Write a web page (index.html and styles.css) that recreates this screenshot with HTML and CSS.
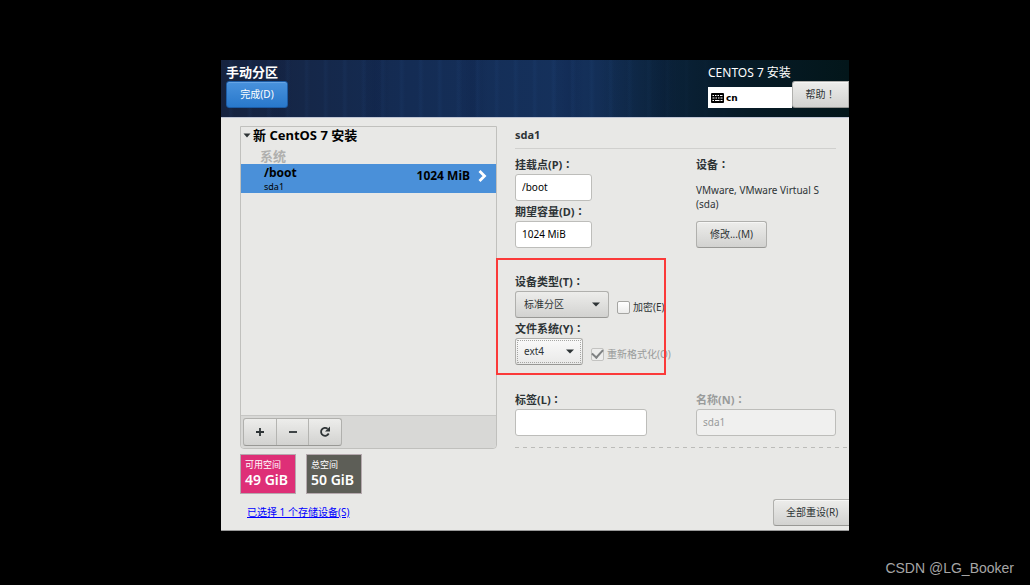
FILE: index.html
```html
<!DOCTYPE html>
<html lang="zh-CN">
<head>
<meta charset="utf-8">
<title>手动分区</title>
<link rel="stylesheet" href="styles.css">
</head>
<body>
<main class="installer">
  <header class="banner">
    <div class="banner-left">
      <h1 class="banner-title">手动分区</h1>
      <button class="btn btn-primary" type="button">完成(D)</button>
    </div>
    <div class="banner-right">
      <div class="product">CENTOS 7 安装</div>
      <div class="banner-tools">
        <button class="keyboard" type="button">
          <svg width="13" height="10" viewBox="0 0 13 10" aria-hidden="true"><rect width="13" height="10" rx="1"/><path d="M1.500 2.500h1.500m1 0h1.500m1 0h1.500m1 0h2.500M1.500 5h2m1 0h1.500m1 0h1.500m1 0h2M1.500 7.500h1.500m1 0h4.500m1 0h2" stroke="#fff"/></svg>
          cn
        </button>
        <button class="btn help" type="button">帮助<span class="mark" lang="zh-TW">！</span></button>
      </div>
    </div>
  </header>

  <div class="content">
    <section class="left">
      <div class="tree">
        <div class="tree-body">
          <div class="tree-head"><svg width="8" height="5" viewBox="0 0 8 5" aria-hidden="true"><path d="M0.500 0.500h7L4 4.500z" fill="#2e3436"/></svg>新 CentOS 7 安装</div>
          <div class="tree-group">系统</div>
          <div class="tree-row">
            <div class="mount"><b>/boot</b><small>sda1</small></div>
            <span class="size">1024 MiB</span>
            <svg class="chevron" width="9" height="12" viewBox="0 0 9 12" aria-hidden="true"><path d="M1.500 1l5 5-5 5" fill="none" stroke="#fff" stroke-width="2.800"/></svg>
          </div>
        </div>
        <div class="toolbar">
          <div class="tool-group">
            <button type="button" aria-label="添加"><svg width="10" height="10" viewBox="0 0 10 10"><path d="M5 1v8M1 5h8"/></svg></button>
            <button type="button" aria-label="删除"><svg width="10" height="10" viewBox="0 0 10 10"><path d="M1 5h8"/></svg></button>
            <button type="button" aria-label="刷新"><svg width="12" height="12" viewBox="0 0 12 12"><path d="M8.600 2.700A4 4 0 1 0 9.700 7.500"/><path class="solid" d="M11 0.500v5H6z"/></svg></button>
          </div>
        </div>
      </div>
      <div class="spaces">
        <div class="space free"><span>可用空间</span><strong>49 GiB</strong></div>
        <div class="space total"><span>总空间</span><strong>50 GiB</strong></div>
      </div>
      <a class="devices" href="#">已选择 1 个存储设备(S)</a>
    </section>

    <form class="details">
      <h2 class="details-title">sda1</h2>
      <div class="pair">
        <div class="field">
          <label for="mount">挂载点(P)<span class="mark" lang="zh-TW">：</span></label>
          <input class="text short" id="mount" type="text" value="/boot">
          <label for="capacity">期望容量(D)<span class="mark" lang="zh-TW">：</span></label>
          <input class="text short" id="capacity" type="text" value="1024 MiB">
        </div>
        <div class="field">
          <div class="label">设备<span class="mark" lang="zh-TW">：</span></div>
          <p class="device-name">VMware, VMware Virtual S (sda)</p>
          <button class="btn modify" type="button">修改...(M)</button>
        </div>
      </div>

      <div class="types">
        <label for="type">设备类型(T)<span class="mark" lang="zh-TW">：</span></label>
        <div class="line">
          <span class="drop drop-type">
            <select id="type"><option>标准分区</option></select>
            <svg width="8" height="5" viewBox="0 0 8 5" aria-hidden="true"><path d="M0 0.500h8L4 4.500z"/></svg>
          </span>
          <label class="check clipped"><input type="checkbox">加密(E)</label>
        </div>
        <label for="fs">文件系统(Y)<span class="mark" lang="zh-TW">：</span></label>
        <div class="line">
          <span class="drop drop-fs">
            <select id="fs"><option>ext4</option></select>
            <svg width="8" height="5" viewBox="0 0 8 5" aria-hidden="true"><path d="M0 0.500h8L4 4.500z"/></svg>
          </span>
          <label class="check off"><input type="checkbox" checked disabled>重新格式化(O)</label>
        </div>
        <div class="highlight"></div>
      </div>

      <div class="pair">
        <div class="field">
          <label for="label">标签(L)<span class="mark" lang="zh-TW">：</span></label>
          <input class="text medium" id="label" type="text">
        </div>
        <div class="field">
          <label class="off" for="name">名称(N)<span class="mark" lang="zh-TW">：</span></label>
          <input class="text" id="name" type="text" value="sda1" disabled>
        </div>
      </div>
      <svg class="divider" height="1" width="100%" aria-hidden="true"><line x1="0" y1="0.500" x2="100%" y2="0.500" stroke="#bcbcb9" stroke-dasharray="4 4"/></svg>
      <button class="btn reset" type="button">全部重设(R)</button>
    </form>
  </div>
</main>
<footer class="credit">CSDN @LG_Booker</footer>
</body>
</html>
```
FILE: styles.css
```css
* { box-sizing: border-box; }

body {
  margin: 0;
  padding: 60px 181px 0 221px;
  background: #000;
  color: #2e3436;
  font: 10px/14px "Noto Sans", "Noto Sans CJK SC", sans-serif;
}

button, input, select { font: inherit; color: inherit; margin: 0; }
h1, h2, p { margin: 0; }

/* Centred full-width punctuation */
.mark { font-family: "Noto Sans CJK TC", sans-serif; line-height: 1; }

.installer {
  background: #e8e8e6;
  border-bottom: 1px solid #999;
  overflow: hidden;
}

.banner {
  display: flex;
  justify-content: space-between;
  height: 58px;
  padding: 4px 0 0 5px;
  border-bottom: 1px solid #bfc5d4;
  color: #fff;
  background:
    linear-gradient(90deg, transparent 60%, #061a26 84%, #03161a),
    repeating-linear-gradient(90deg, transparent 0 7px, rgba(60, 120, 200, .05) 9px 10px, transparent 13px 19px),
    repeating-linear-gradient(90deg, transparent 0 41px, rgba(5, 15, 50, .12) 56px 58px, transparent 73px 97px),
    linear-gradient(90deg, #16233f 0%, #142c54 30%, #15315c 55%, #0e2848 75%);
}

.banner-title { font-size: 13px; line-height: 17px; font-weight: 700; }
.banner-right { width: 141px; }
.product { font-size: 12px; line-height: 17px; }
.banner-tools { display: flex; align-items: flex-end; }

.btn {
  height: 27px;
  border: 1px solid #b0b0ad;
  border-bottom-color: #989895;
  border-radius: 3px;
  padding: 0 12px 2px;
  background: linear-gradient(#ededeb, #d2d2d0);
  box-shadow: inset 0 1px #f6f6f5;
  color: #2e3436;
  white-space: nowrap;
}

.btn-primary {
  display: block;
  width: 62px;
  border-color: #1c5ca6;
  color: #fff;
  background: linear-gradient(#4992dd, #2878cb);
  box-shadow: inset 0 1px #67a5e5;
}

.keyboard {
  flex: 1;
  display: flex;
  align-items: center;
  gap: 2px;
  height: 21px;
  padding: 0 3px;
  border: 0;
  background: #fff;
  color: #000;
  font-family: "DejaVu Sans", sans-serif;
  font-size: 9px;
  font-weight: 700;
}

.help { width: 57px; border-radius: 3px 0 0 3px; }

.content { display: flex; gap: 18px; padding: 8px 0 4px 19px; }
.left { width: 257px; }

.tree { border: 1px solid #c0c0bd; border-radius: 0 0 4px 4px; }
.tree-body { height: 288px; color: #000; }
.tree-head {
  display: flex;
  align-items: center;
  gap: 2px;
  padding-left: 2px;
  font-size: 13px;
  line-height: 17px;
  font-weight: 700;
}
.tree-group { padding: 4px 0 0 19px; font-size: 13px; line-height: 16px; font-weight: 700; color: #b0b0ae; }
.tree-row {
  display: flex;
  align-items: center;
  height: 29px;
  padding: 0 9px 0 23px;
  background: #4a90d9;
  font-size: 12px;
}
.mount { flex: 1; display: grid; }
.mount b { line-height: 16px; }
.mount small { font-size: 9px; line-height: 12px; }
.size { margin: 0 8px 6px 0; font-weight: 700; }
.chevron { margin-bottom: 6px; }

.toolbar { padding: 2px; border-top: 1px solid #c6c6c4; background: #d8d8d6; border-radius: 0 0 4px 4px; }
.tool-group {
  display: flex;
  width: 99px;
  height: 28px;
  border: 1px solid #b0b0ad;
  border-bottom-color: #989895;
  border-radius: 3px;
  background: linear-gradient(#ededeb, #d2d2d0);
}
.tool-group button {
  flex: 1;
  display: grid;
  place-items: center;
  padding: 0;
  border: 0;
  background: none;
}
.tool-group button + button { border-left: 1px solid #b4b4b1; }
.tool-group path { fill: none; stroke: #2e3436; stroke-width: 1.8; }
.tool-group .solid { fill: #2e3436; stroke: none; }

.spaces { display: flex; gap: 10px; margin-top: 5px; }
.space {
  display: grid;
  align-content: start;
  width: 56px;
  height: 40px;
  padding: 3px 4px 0;
  border: 1px solid #b5a9ae;
  color: #fff;
  white-space: nowrap;
}
.space span { font-size: 9px; line-height: 14px; }
.space strong { font-size: 14px; line-height: 16px; font-weight: 600; }
.free { background: #de2f77; }
.total { background: #5d5e57; }

.devices { display: inline-block; margin: 11px 0 0 7px; color: #00f; }

.details { flex: 1; min-width: 0; display: flex; flex-direction: column; }
.details-title {
  margin-right: 13px;
  padding-bottom: 4px;
  border-bottom: 1px solid #d0d0ce;
  font-size: 11px;
  line-height: 18px;
}
.pair { display: grid; grid-template-columns: 181px 1fr; padding-right: 13px; }
.field { display: flex; flex-direction: column; align-items: flex-start; }
.details-title + .pair { margin-top: 5px; }
.field > label, .label, .types > label {
  display: block;
  height: 20px;
  font-size: 11px;
  line-height: 22px;
  font-weight: 700;
}

.text {
  width: 100%;
  height: 27px;
  padding: 0 6px 2px;
  border: 1px solid #bdbdba;
  border-radius: 3px;
  background: #fff;
  color: #000;
}
.text.short { width: 77px; }
.text.medium { width: 132px; }
.text:disabled { background: #f0f0ef; color: #999b9b; }
.off { color: #999b9b; }

.device-name { margin-top: 9px; }
.modify { width: 71px; margin-top: 10px; }

.types { position: relative; margin: 23px 0 24px; }
.line { display: flex; gap: 8px; }
.drop { display: inline-grid; align-items: center; }
.drop > * { grid-area: 1 / 1; }
.drop svg { justify-self: end; margin-right: 9px; fill: #2e3436; pointer-events: none; }
.drop select {
  appearance: none;
  width: 100%;
  height: 27px;
  padding: 0 8px 2px;
  border: 1px solid #b0b0ad;
  border-bottom-color: #989895;
  border-radius: 3px;
  background: linear-gradient(#ededeb, #d2d2d0);
}
.drop-type { width: 94px; }
.drop-fs { width: 68px; }
.drop-fs select {
  background: linear-gradient(#fafafa, #e9e9e8);
  outline: 1px dotted #a5a5a2;
  outline-offset: -3px;
}

.check { display: flex; align-items: center; gap: 3px; padding-top: 5px; white-space: nowrap; }
.check input {
  appearance: none;
  display: grid;
  place-items: center;
  width: 13px;
  height: 13px;
  border: 1px solid #a5a5a2;
  border-radius: 2px;
  background: linear-gradient(#fff, #ececeb);
}
.check input:disabled { border-color: #c3c3c1; background: #ededec; }
.check input:checked::before {
  content: "";
  width: 9px;
  height: 5px;
  margin-bottom: 3px;
  border: solid #7f8283;
  border-width: 0 0 2px 2px;
  transform: rotate(-48deg);
}
.clipped { width: 48px; overflow: hidden; }

.highlight {
  position: absolute;
  top: -13px;
  left: -19px;
  width: 170px;
  height: 117px;
  border: 2px solid #fb3a39;
  pointer-events: none;
}

.divider { display: block; margin-top: 11px; }
.reset { align-self: flex-end; width: 76px; margin-top: 51px; border-right: 0; border-radius: 3px 0 0 3px; }

.credit {
  margin: 28px -165px 0 0;
  text-align: right;
  color: #a6a6a6;
  font: 14px/18px "Liberation Sans", sans-serif;
}
```
